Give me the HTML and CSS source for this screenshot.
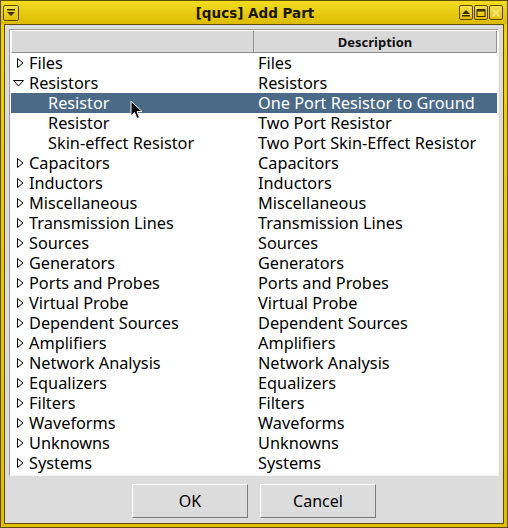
FILE: index.html
```html
<!DOCTYPE html>
<html>
<head>
<meta charset="utf-8">
<link rel="stylesheet" href="styles.css">
</head>
<body>
<div class="window">
  <div class="titlebar">
    <div class="tbtn menu"><svg width="10" height="10" viewBox="0 0 10 10"><rect x="1" y="1" width="8" height="1.5" fill="#3a2e00"/><path d="M1 4 H9 L5 8 Z" fill="#3a2e00"/></svg></div>
    <div class="title">[qucs] Add Part</div>
    <div class="tbtns">
      <div class="tbtn"><svg width="10" height="10" viewBox="0 0 10 10"><path d="M1 6 L5 2 L9 6 Z" fill="#3a2e00"/><rect x="1" y="7" width="8" height="1.5" fill="#3a2e00"/></svg></div>
      <div class="tbtn"><svg width="10" height="10" viewBox="0 0 10 10"><rect x="1" y="1.5" width="8" height="7" fill="none" stroke="#3a2e00" stroke-width="1"/><rect x="1" y="1.5" width="8" height="2" fill="#3a2e00"/></svg></div>
      <div class="tbtn close"><svg width="10" height="10" viewBox="0 0 10 10"><path d="M1.5 1.5 L8.5 8.5 M8.5 1.5 L1.5 8.5" stroke="#f4e27a" stroke-width="2"/></svg></div>
    </div>
  </div>
  <div class="client">
    <div class="tree">
      <div class="header">
        <div class="hcell"></div>
        <div class="hcell">Description</div>
      </div>
      <div class="rows">
        <div class="row"><div class="c1"><span class="arr"><svg width="7" height="10" viewBox="0 0 7 10"><path d="M0.5 0.5 L6 5 L0.5 9.5 Z" fill="#fff" stroke="#000" stroke-width="1"/></svg></span>Files</div><div class="c2">Files</div></div>
        <div class="row"><div class="c1"><span class="arr"><svg width="11" height="7" viewBox="0 0 11 7"><path d="M0.5 0.5 L10.5 0.5 L5.5 6 Z" fill="#fff" stroke="#000" stroke-width="1"/></svg></span>Resistors</div><div class="c2">Resistors</div></div>
        <div class="row sel"><div class="c1 child">Resistor</div><div class="c2">One Port Resistor to Ground</div></div>
        <div class="row"><div class="c1 child">Resistor</div><div class="c2">Two Port Resistor</div></div>
        <div class="row"><div class="c1 child">Skin-effect Resistor</div><div class="c2">Two Port Skin-Effect Resistor</div></div>
        <div class="row"><div class="c1"><span class="arr"><svg width="7" height="10" viewBox="0 0 7 10"><path d="M0.5 0.5 L6 5 L0.5 9.5 Z" fill="#fff" stroke="#000" stroke-width="1"/></svg></span>Capacitors</div><div class="c2">Capacitors</div></div>
        <div class="row"><div class="c1"><span class="arr"><svg width="7" height="10" viewBox="0 0 7 10"><path d="M0.5 0.5 L6 5 L0.5 9.5 Z" fill="#fff" stroke="#000" stroke-width="1"/></svg></span>Inductors</div><div class="c2">Inductors</div></div>
        <div class="row"><div class="c1"><span class="arr"><svg width="7" height="10" viewBox="0 0 7 10"><path d="M0.5 0.5 L6 5 L0.5 9.5 Z" fill="#fff" stroke="#000" stroke-width="1"/></svg></span>Miscellaneous</div><div class="c2">Miscellaneous</div></div>
        <div class="row"><div class="c1"><span class="arr"><svg width="7" height="10" viewBox="0 0 7 10"><path d="M0.5 0.5 L6 5 L0.5 9.5 Z" fill="#fff" stroke="#000" stroke-width="1"/></svg></span>Transmission Lines</div><div class="c2">Transmission Lines</div></div>
        <div class="row"><div class="c1"><span class="arr"><svg width="7" height="10" viewBox="0 0 7 10"><path d="M0.5 0.5 L6 5 L0.5 9.5 Z" fill="#fff" stroke="#000" stroke-width="1"/></svg></span>Sources</div><div class="c2">Sources</div></div>
        <div class="row"><div class="c1"><span class="arr"><svg width="7" height="10" viewBox="0 0 7 10"><path d="M0.5 0.5 L6 5 L0.5 9.5 Z" fill="#fff" stroke="#000" stroke-width="1"/></svg></span>Generators</div><div class="c2">Generators</div></div>
        <div class="row"><div class="c1"><span class="arr"><svg width="7" height="10" viewBox="0 0 7 10"><path d="M0.5 0.5 L6 5 L0.5 9.5 Z" fill="#fff" stroke="#000" stroke-width="1"/></svg></span>Ports and Probes</div><div class="c2">Ports and Probes</div></div>
        <div class="row"><div class="c1"><span class="arr"><svg width="7" height="10" viewBox="0 0 7 10"><path d="M0.5 0.5 L6 5 L0.5 9.5 Z" fill="#fff" stroke="#000" stroke-width="1"/></svg></span>Virtual Probe</div><div class="c2">Virtual Probe</div></div>
        <div class="row"><div class="c1"><span class="arr"><svg width="7" height="10" viewBox="0 0 7 10"><path d="M0.5 0.5 L6 5 L0.5 9.5 Z" fill="#fff" stroke="#000" stroke-width="1"/></svg></span>Dependent Sources</div><div class="c2">Dependent Sources</div></div>
        <div class="row"><div class="c1"><span class="arr"><svg width="7" height="10" viewBox="0 0 7 10"><path d="M0.5 0.5 L6 5 L0.5 9.5 Z" fill="#fff" stroke="#000" stroke-width="1"/></svg></span>Amplifiers</div><div class="c2">Amplifiers</div></div>
        <div class="row"><div class="c1"><span class="arr"><svg width="7" height="10" viewBox="0 0 7 10"><path d="M0.5 0.5 L6 5 L0.5 9.5 Z" fill="#fff" stroke="#000" stroke-width="1"/></svg></span>Network Analysis</div><div class="c2">Network Analysis</div></div>
        <div class="row"><div class="c1"><span class="arr"><svg width="7" height="10" viewBox="0 0 7 10"><path d="M0.5 0.5 L6 5 L0.5 9.5 Z" fill="#fff" stroke="#000" stroke-width="1"/></svg></span>Equalizers</div><div class="c2">Equalizers</div></div>
        <div class="row"><div class="c1"><span class="arr"><svg width="7" height="10" viewBox="0 0 7 10"><path d="M0.5 0.5 L6 5 L0.5 9.5 Z" fill="#fff" stroke="#000" stroke-width="1"/></svg></span>Filters</div><div class="c2">Filters</div></div>
        <div class="row"><div class="c1"><span class="arr"><svg width="7" height="10" viewBox="0 0 7 10"><path d="M0.5 0.5 L6 5 L0.5 9.5 Z" fill="#fff" stroke="#000" stroke-width="1"/></svg></span>Waveforms</div><div class="c2">Waveforms</div></div>
        <div class="row"><div class="c1"><span class="arr"><svg width="7" height="10" viewBox="0 0 7 10"><path d="M0.5 0.5 L6 5 L0.5 9.5 Z" fill="#fff" stroke="#000" stroke-width="1"/></svg></span>Unknowns</div><div class="c2">Unknowns</div></div>
        <div class="row"><div class="c1"><span class="arr"><svg width="7" height="10" viewBox="0 0 7 10"><path d="M0.5 0.5 L6 5 L0.5 9.5 Z" fill="#fff" stroke="#000" stroke-width="1"/></svg></span>Systems</div><div class="c2">Systems</div></div>
      </div>
      <svg class="cursor" width="14" height="22" viewBox="0 0 14 22"><path d="M1 1 L1 16 L4.5 12.5 L7 18.5 L9.5 17.5 L7 11.5 L12 11.5 Z" fill="#000" stroke="#fff" stroke-width="1"/></svg>
    </div>
    <div class="buttons">
      <button class="btn">OK</button>
      <button class="btn">Cancel</button>
    </div>
  </div>
</div>
</body>
</html>
```
FILE: styles.css
```css
* { box-sizing: border-box; }
html, body { margin: 0; padding: 0; background: #dcdcdc; }
body { font-family: "Noto Sans", "DejaVu Sans", sans-serif; }
.window {
  width: 508px; height: 528px;
  border: 1px solid #5e4c00;
  background: linear-gradient(#f0d400, #e0be00);
  display: flex; flex-direction: column;
  padding: 0 3px 3px 3px;
}
.titlebar {
  height: 23px;
  display: flex; align-items: center;
  position: relative;
  background: linear-gradient(#f2dc20, #dcbb00);
  margin: 0 -3px;
  padding: 0 4px 0 2px;
}
.title {
  flex: 1; text-align: center;
  font: bold 13.5px "DejaVu Sans", sans-serif;
  color: #1a1400;
  padding-left: 32px;
}
.tbtns { display: flex; gap: 1px; }
.tbtn {
  width: 14px; height: 15px;
  border: 1px solid #5a4800;
  border-radius: 2px;
  background: linear-gradient(#f6e04a, #e0c000);
  display: flex; align-items: center; justify-content: center;
}
.tbtn.menu { width: 16px; height: 16px; }
.client {
  flex: 1;
  background: #dcdcdc;
  border: 1px solid #5e4c00;
  display: flex; flex-direction: column;
  padding: 4px 4px 5px 4px;
}
.tree {
  position: relative;
  height: 447px;
  background: #fff;
  border-top: 1px solid #9a9a9a;
  border-left: 1px solid #9a9a9a;
  border-right: 1px solid #f4f4f4;
  border-bottom: 1px solid #f4f4f4;
  padding: 1px;
}
.header { display: flex; height: 22px; }
.hcell {
  height: 22px;
  background: #d9d9d9;
  border-right: 1px solid #8e8e8e;
  border-bottom: 1px solid #8e8e8e;
  font: bold 13px "Noto Sans", sans-serif;
  display: flex; align-items: center; justify-content: center;
  color: #111;
}
.hcell:first-child { width: 243px; border-left: 1px solid #fff; }
.hcell:last-child { flex: 1; }
.rows { font-size: 16.3px; color: #000; }
.row { display: flex; height: 20px; align-items: center; }
.row.sel { background: #4a6a88; color: #fff; }
.c1 { width: 244px; padding-left: 2px; display: flex; align-items: center; white-space: nowrap; }
.c1.child { padding-left: 37px; }
.arr { width: 11px; margin-right: 5px; display: inline-flex; align-items: center; justify-content: flex-end; }
.c2 { padding-left: 3px; white-space: nowrap; }
.cursor { position: absolute; left: 120px; top: 70px; }
.buttons { display: flex; justify-content: center; gap: 12px; padding-top: 8px; }
.btn {
  width: 116px; height: 34px;
  background: #dcdcdc;
  border: 1px solid;
  border-color: #fff #7a7a7a #7a7a7a #fff;
  font: 16px "Noto Sans", sans-serif;
  color: #000;
  padding: 0;
}
```
